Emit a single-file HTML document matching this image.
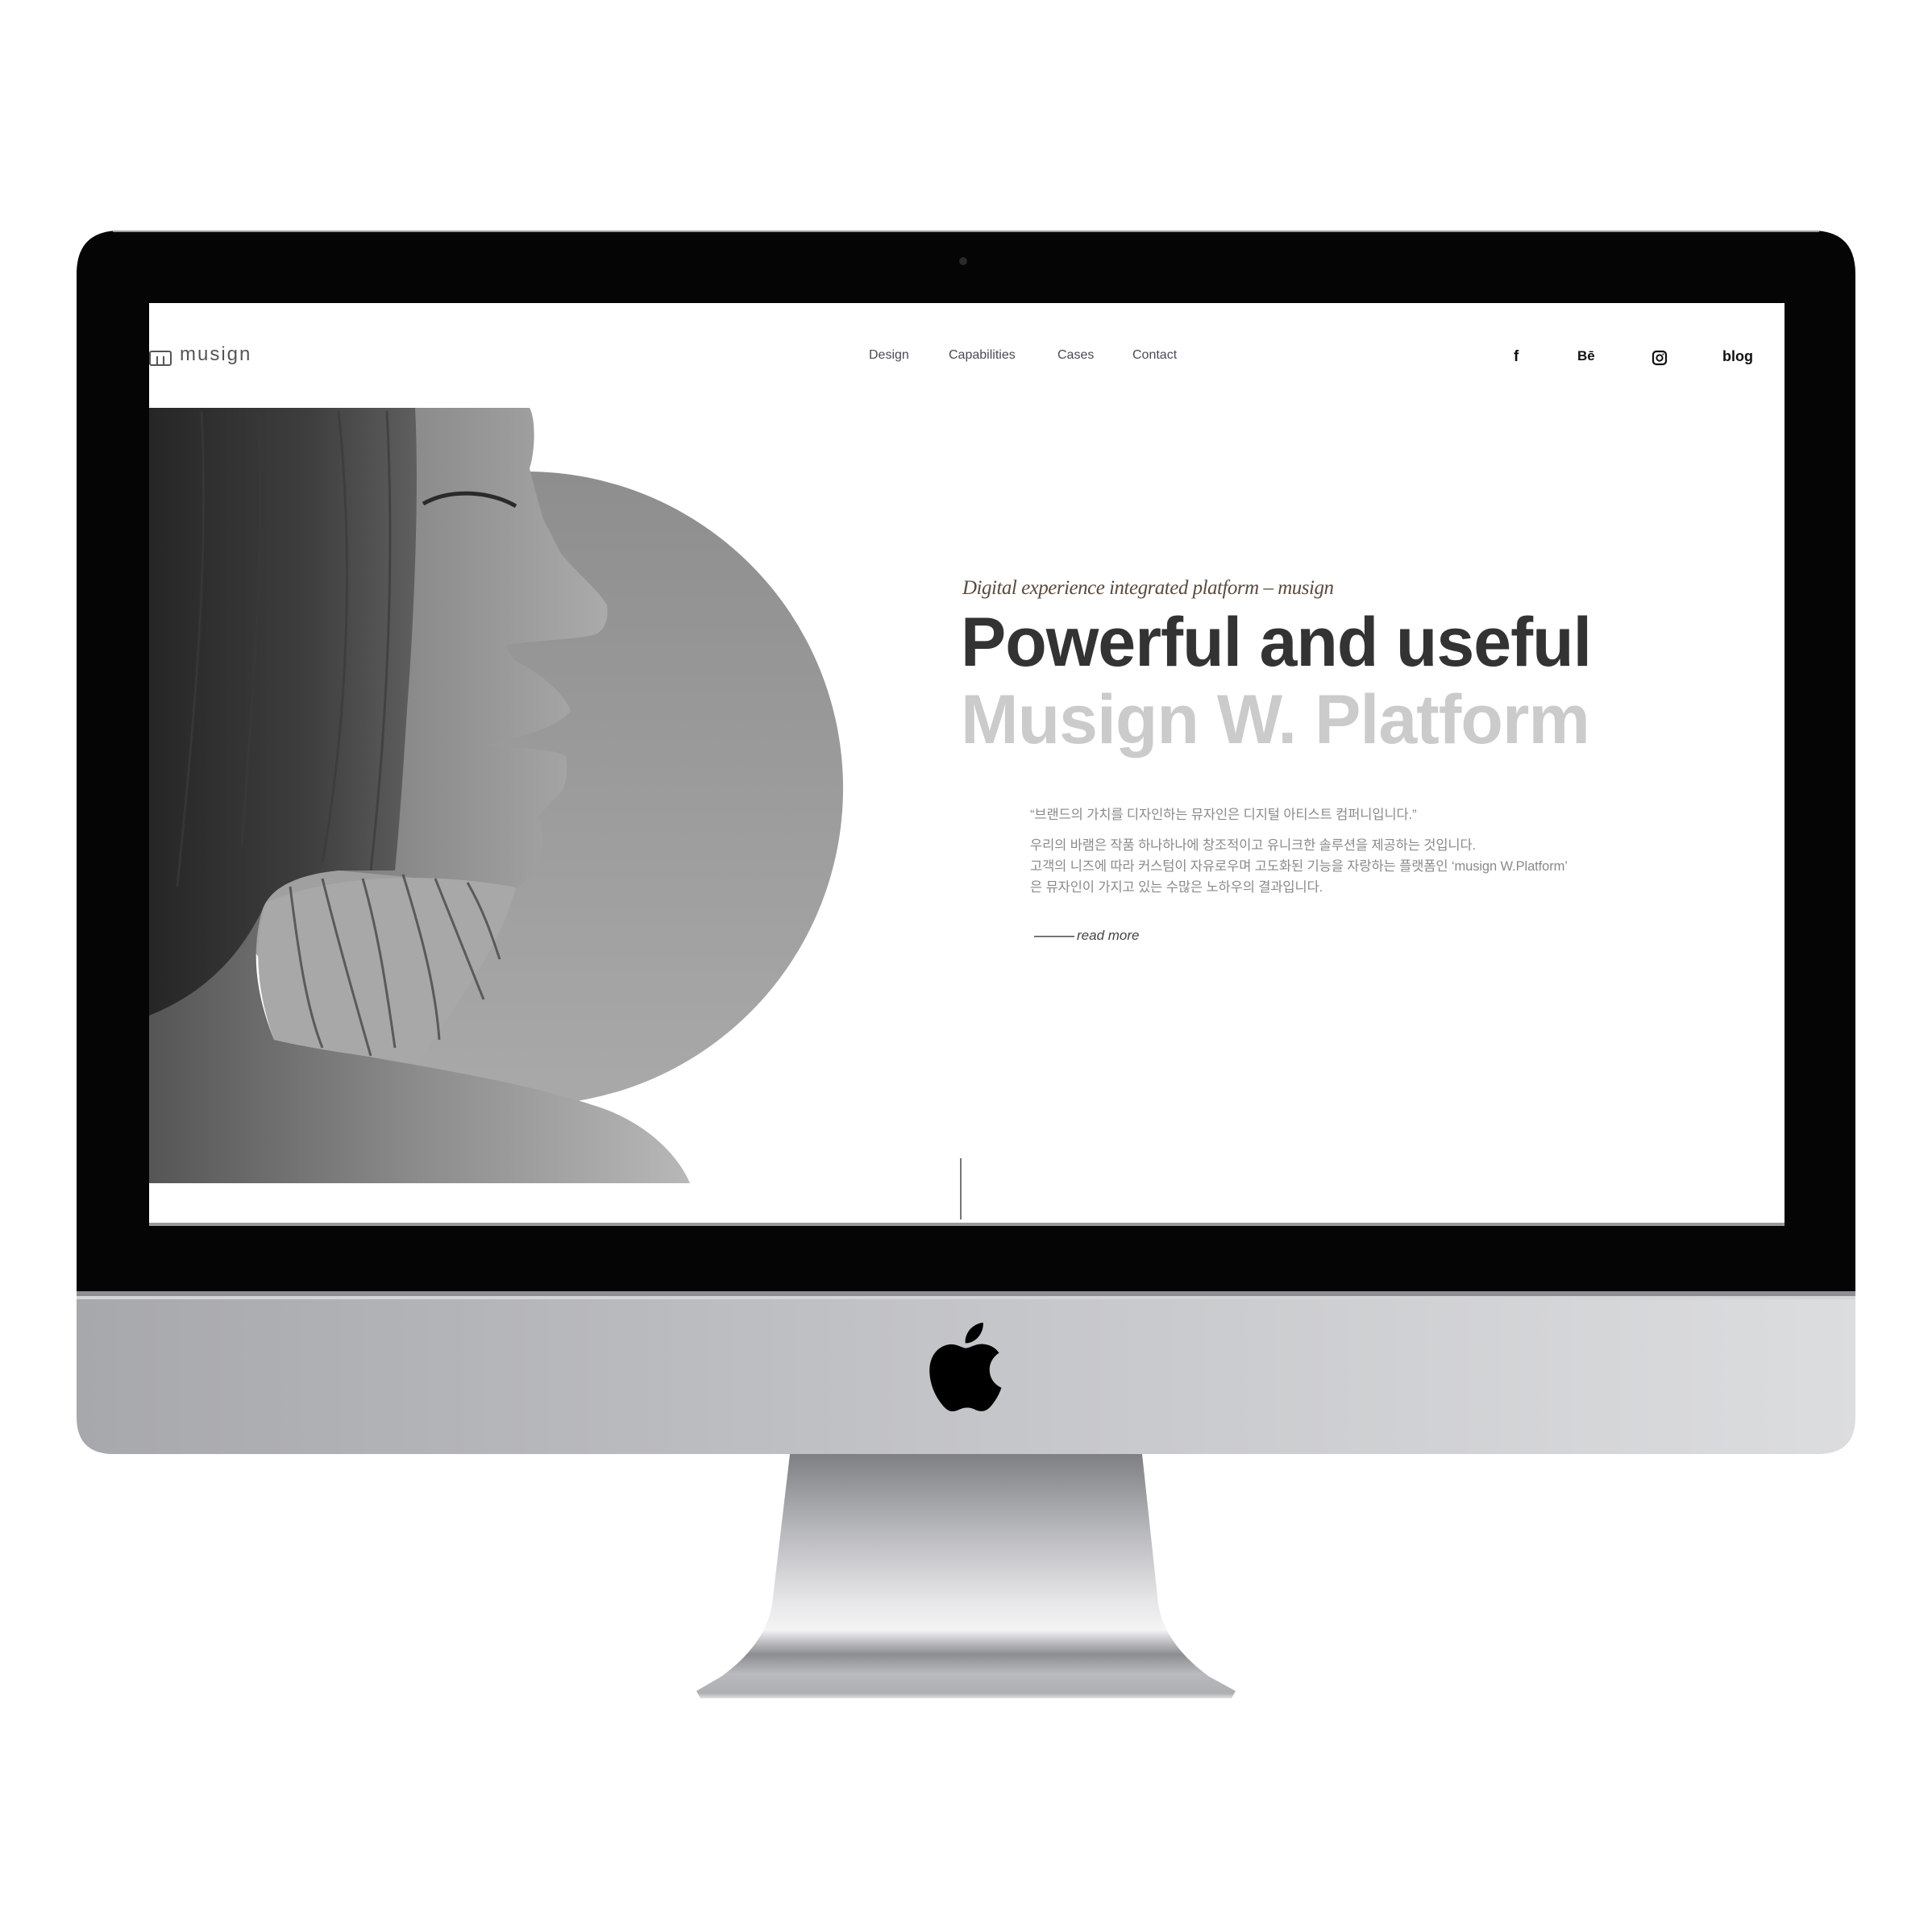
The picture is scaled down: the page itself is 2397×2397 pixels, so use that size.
<!DOCTYPE html>
<html><head><meta charset="utf-8"><style>
html,body{margin:0;padding:0;background:#fff;}
body{width:2397px;height:2397px;position:relative;overflow:hidden;font-family:"Liberation Sans","Noto Sans CJK KR",sans-serif;}
.a{position:absolute;white-space:nowrap;}
svg{position:absolute;left:0;top:0;}
.nav{font-size:16px;color:#4a4a55;top:432px;}
.soc{font-weight:700;color:#111;top:432px;font-size:17px;}
.kr{font-family:"Liberation Sans","Noto Sans CJK KR",sans-serif;font-size:16.5px;color:#8a8a8a;left:1278px;letter-spacing:-0.1px;}
</style></head><body>
<svg width="2397" height="2397" viewBox="0 0 2397 2397">
<defs>
<linearGradient id="chin" x1="0" x2="1" y1="0" y2="0"><stop offset="0" stop-color="#a7a8ac"/><stop offset="0.5" stop-color="#c4c5c8"/><stop offset="1" stop-color="#dcdddf"/></linearGradient>
<linearGradient id="stand" x1="0" x2="0" y1="0" y2="1">
<stop offset="0" stop-color="#7f8084"/><stop offset="0.3" stop-color="#b5b6b9"/><stop offset="0.6" stop-color="#e6e6e8"/><stop offset="0.72" stop-color="#f4f4f5"/><stop offset="0.76" stop-color="#c9c9cc"/><stop offset="0.82" stop-color="#8c8d91"/><stop offset="0.9" stop-color="#b9babd"/><stop offset="0.98" stop-color="#aeafb2"/><stop offset="1" stop-color="#e0e0e2"/></linearGradient>
<linearGradient id="circ" x1="0" x2="0" y1="0" y2="1"><stop offset="0" stop-color="#8e8e8e"/><stop offset="1" stop-color="#a9a9a9"/></linearGradient>
<linearGradient id="skin" x1="0" x2="1" y1="0" y2="0"><stop offset="0" stop-color="#555"/><stop offset="0.5" stop-color="#8c8c8c"/><stop offset="1" stop-color="#b8b8b8"/></linearGradient>
<linearGradient id="hair" x1="0" x2="1" y1="0" y2="0"><stop offset="0" stop-color="#262626"/><stop offset="0.6" stop-color="#3e3e3e"/><stop offset="1" stop-color="#5f5f5f"/></linearGradient>
<clipPath id="scr"><rect x="185" y="376" width="2029" height="1145"/></clipPath>
</defs>
<path d="M95,340 Q95,286 149,286 L2248,286 Q2302,286 2302,340 L2302,1602 L95,1602 Z" fill="#050505"/>
<path d="M140,287 L2257,287" stroke="#9a9a9a" stroke-width="2"/>
<circle cx="1195" cy="324" r="5" fill="#2a2a2a"/>
<path d="M95,1602 L2302,1602 L2302,1758 Q2302,1804 2256,1804 L141,1804 Q95,1804 95,1758 Z" fill="url(#chin)"/>
<rect x="95" y="1602" width="2207" height="6" fill="#8e8f92"/>
<rect x="95" y="1608" width="2207" height="4" fill="#d4d5d7"/>
<path d="M980,1804 L1417,1804 L1437,1990 Q1445,2040 1500,2080 L1533,2098 L1528,2107 L869,2107 L864,2098 L895,2080 Q950,2040 958,1990 Z" fill="url(#stand)"/>
<g transform="translate(1132,1630) scale(5.5)"><path fill="#000" d="M18.71 19.5c-.83 1.24-1.71 2.45-3.05 2.470-1.34.03-1.77-.79-3.29-.79-1.53 0-2 .77-3.27.82-1.31.05-2.3-1.32-3.14-2.53C4.25 17 2.94 12.45 4.7 9.39c.87-1.52 2.430-2.48 4.12-2.51 1.28-.02 2.5.87 3.29.87.78 0 2.26-1.070 3.81-.91.65.03 2.47.26 3.64 1.98-.09.06-2.17 1.28-2.15 3.810.03 3.02 2.65 4.03 2.68 4.04-.03.07-.42 1.44-1.38 2.83M13 3.5c.73-.83 1.94-1.46 2.94-1.5.13 1.17-.34 2.35-1.040 3.19-.69.85-1.83 1.51-2.95 1.42-.15-1.15.41-2.35 1.05-3.11z"/></g>
<rect x="185" y="376" width="2029" height="1145" fill="#fff"/>
<rect x="185" y="1517" width="2029" height="4" fill="#9a9a9a"/>
<g clip-path="url(#scr)">
<circle cx="653" cy="978" r="393" fill="url(#circ)"/>
<path d="M185,506 L657,506 C665,520 664,560 657,581 C664,610 670,630 674,644 C685,665 692,680 697,688 C720,715 745,735 753,751 C756,770 748,785 736,788 C700,795 650,795 628,801 C630,810 635,815 640,820 C670,835 700,860 708,882 C690,905 640,915 600,926 C640,928 690,928 702,939 C705,955 702,975 697,982 C685,995 672,1005 668,1014 C672,1025 675,1040 674,1051 C665,1080 652,1095 640,1101 L420,1080 C370,1085 335,1100 325,1130 C312,1180 316,1230 340,1290 C500,1320 650,1340 753,1377 C800,1395 840,1430 856,1468 L185,1468 Z" fill="url(#skin)"/>
<path d="M185,506 L515,506 C520,600 515,750 505,880 C500,960 495,1030 490,1080 L420,1080 C370,1085 335,1100 325,1130 C300,1180 260,1230 185,1260 Z" fill="url(#hair)"/>
<path d="M330,1120 C420,1080 560,1085 640,1101 C620,1180 560,1250 520,1320 C450,1310 380,1300 340,1290 C318,1230 314,1170 330,1120 Z" fill="#a8a8a8"/>
<g stroke="#3a3a3a" stroke-width="3" fill="none" opacity="0.7">
<path d="M360,1100 C370,1180 380,1250 400,1300"/><path d="M400,1090 C420,1170 440,1240 460,1310"/><path d="M450,1090 C470,1160 480,1230 490,1300"/><path d="M500,1085 C520,1150 540,1220 545,1290"/><path d="M540,1090 C560,1140 580,1190 600,1240"/><path d="M580,1095 C600,1130 610,1160 620,1190"/>
<path d="M250,510 C260,700 240,900 220,1100"/><path d="M320,510 C330,700 310,900 300,1050"/><path d="M420,510 C440,700 430,900 400,1070"/><path d="M480,510 C490,700 480,900 460,1080"/>
</g>
<path d="M525,625 C560,605 610,610 640,628" stroke="#2a2a2a" stroke-width="5" fill="none"/>
</g>
<rect x="186" y="436" width="26" height="17" fill="none" stroke="#555" stroke-width="2" rx="2"/>
<path d="M195,442 V453 M203,442 V453" stroke="#555" stroke-width="2"/>
<rect x="2051" y="436" width="16" height="16" rx="4" fill="none" stroke="#111" stroke-width="2.2"/>
<circle cx="2059" cy="444" r="3.6" fill="none" stroke="#111" stroke-width="2"/>
<circle cx="2063.5" cy="439.5" r="1" fill="#111"/>
<rect x="1191" y="1437" width="2" height="76" fill="#777"/>
<rect x="1283" y="1161" width="50" height="1.6" fill="#555"/>
</svg>
<div class="a" style="left:223px;top:426px;font-size:24px;color:#555;letter-spacing:2px;">musign</div>
<div class="a nav" style="left:1078px;">Design</div>
<div class="a nav" style="left:1177px;">Capabilities</div>
<div class="a nav" style="left:1312px;">Cases</div>
<div class="a nav" style="left:1405px;">Contact</div>
<div class="a soc" style="left:1878px;font-size:19px;top:432px;">f</div>
<div class="a soc" style="left:1957px;">Bē</div>
<div class="a soc" style="left:2137px;font-size:18px;">blog</div>
<div class="a" style="left:1194px;top:716px;font-family:'Liberation Serif',serif;font-style:italic;font-size:25px;color:#5b4a3e;letter-spacing:-0.5px;">Digital experience integrated platform – musign</div>
<div class="a" style="left:1192px;top:748px;font-size:86px;font-weight:700;color:#333;transform:scaleX(0.98);transform-origin:0 0;letter-spacing:-1px;">Powerful and useful</div>
<div class="a" style="left:1192px;top:844px;font-size:86px;font-weight:700;color:#cbcbcb;transform:scaleX(1.0);transform-origin:0 0;letter-spacing:-1px;">Musign W. Platform</div>
<div class="a kr" style="top:997px;">“브랜드의 가치를 디자인하는 뮤자인은 디지털 아티스트 컴퍼니입니다.”</div>
<div class="a kr" style="top:1035px;">우리의 바램은 작품 하나하나에 창조적이고 유니크한 솔루션을 제공하는 것입니다.</div>
<div class="a kr" style="top:1061px;">고객의 니즈에 따라 커스텀이 자유로우며 고도화된 기능을 자랑하는 플랫폼인 ‘musign W.Platform’</div>
<div class="a kr" style="top:1087px;">은 뮤자인이 가지고 있는 수많은 노하우의 결과입니다.</div>
<div class="a" style="left:1336px;top:1151px;font-size:17px;font-style:italic;color:#444;">read more</div>
</body></html>
